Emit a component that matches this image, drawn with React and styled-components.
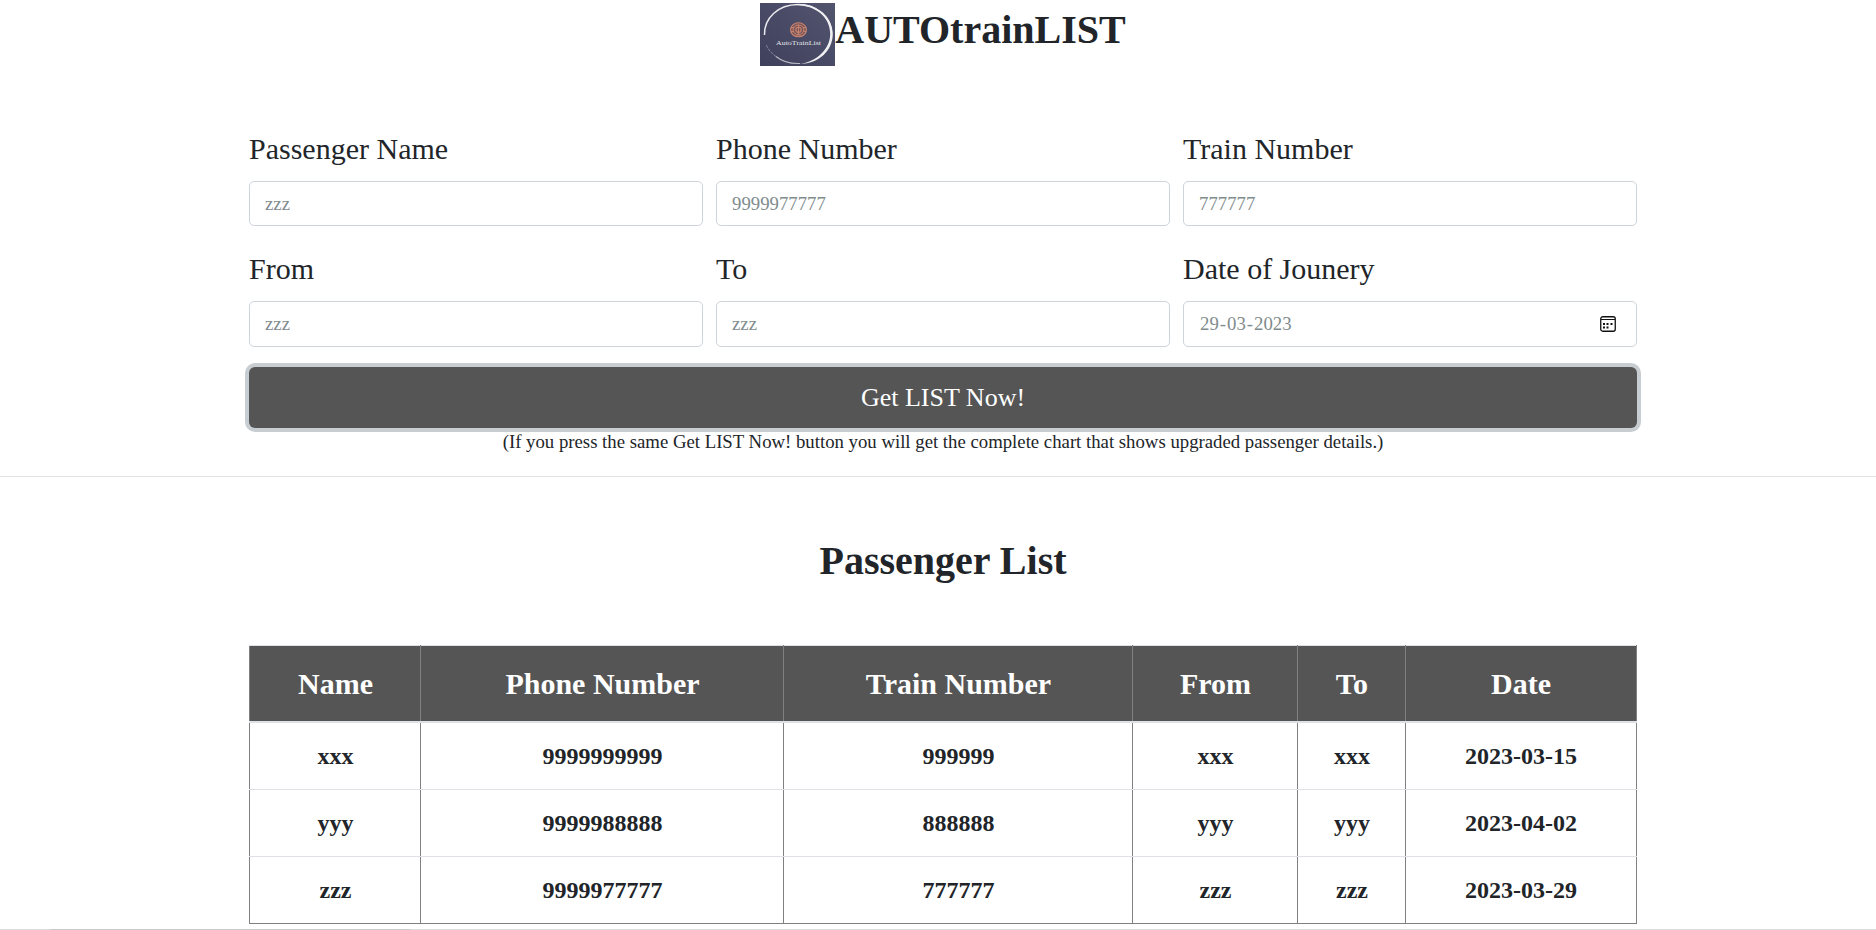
import React from "react";
import styled, { createGlobalStyle } from "styled-components";

const GlobalStyle = createGlobalStyle`
  *, *::before, *::after { box-sizing: border-box; }
  html, body { margin: 0; background: #fff; }
  body {
    color: #212529;
    font-family: "Liberation Serif", "Times New Roman", serif;
    overflow: hidden;
  }
`;

const Page = styled.div`
  display: flex;
  flex-direction: column;
  height: 930px;
`;

const Header = styled.header`
  display: flex;
  justify-content: center;
  align-items: flex-start;
  height: 126px;
  padding: 3px 0 0 10px;
`;

const Logo = styled.svg`
  display: block;
  width: 75px;
  height: 63px;
`;

const Title = styled.h1`
  margin: 0;
  padding-top: 2px;
  font-size: 40px;
  line-height: 50px;
`;

const Container = styled.section`
  width: 1388px;
  margin-left: 249px;
`;

const Fields = styled.div`
  display: grid;
  grid-template-columns: repeat(3, 454px);
  column-gap: 13px;
  row-gap: 20px;
`;

const Field = styled.div`
  display: flex;
  flex-direction: column;
  gap: 10px;
`;

const Label = styled.label`
  font-size: 30px;
  line-height: 45px;
`;

const Input = styled.input`
  width: 100%;
  height: ${(p) => p.$height}px;
  padding: 0 15px;
  border: 1px solid #ced4da;
  border-radius: 5px;
  background: #fff;
  color: #7f8c8d;
  font: 18.75px "Liberation Serif", "Times New Roman", serif;
  outline: none;
`;

const DateInput = styled.div`
  display: flex;
  align-items: center;
  justify-content: space-between;
  height: 46px;
  padding: 0 20px 0 15px;
  border: 1px solid #ced4da;
  border-radius: 5px;
  color: #7f8c8d;
  font-size: 18.75px;
`;

const DatePart = styled.span`
  padding: 0 1px;
`;

const SubmitButton = styled.button`
  display: block;
  width: 100%;
  height: 61px;
  margin: 20px 0 0;
  padding: 0;
  border: 0;
  border-radius: 6px;
  background: #555;
  box-shadow: 0 0 0 4px #c8cdd1;
  color: #fff;
  font: 26px "Liberation Serif", "Times New Roman", serif;
`;

const Note = styled.p`
  margin: 0;
  font-size: 18.75px;
  line-height: 28px;
  text-align: center;
`;

const Divider = styled.hr`
  width: 100%;
  margin: 20px 0 0;
  border: 0;
  border-top: 1px solid #e2e2e2;
`;

const ListTitle = styled.h2`
  margin: 59px 0;
  font-size: 40px;
  line-height: 50px;
  text-align: center;
`;

const Table = styled.table`
  width: 1388px;
  table-layout: fixed;
  border-collapse: collapse;
  text-align: center;
  font-weight: bold;
`;

const Col = styled.col`
  width: ${(p) => p.$width}px;
`;

const HeadCell = styled.th`
  height: 76px;
  padding: 2px 0 0 1px;
  background: #555;
  border: 1px solid gray;
  border-top-color: #dee2e6;
  border-bottom: 2px solid #dee2e6;
  color: #fff;
  font-size: 30px;

  &:last-child { padding-left: 0; }
`;

const Cell = styled.td`
  height: ${(p) => (p.$first ? 68 : 67)}px;
  padding: ${(p) => (p.$first ? 2 : 0)}px 0 0 1px;
  border: 1px solid gray;
  border-top-color: #dee2e6;
  border-bottom-color: ${(p) => (p.$last ? "gray" : "#dee2e6")};
  font-size: 24px;

  &:last-child { padding-left: 0; }
`;

const BottomEdge = styled.footer`
  height: 1px;
  margin-top: auto;
  background: linear-gradient(90deg, #dcdcdc 50px, #c9c9c9 50px 410px, #dcdcdc 410px);
`;

function TrainLogo() {
  return (
    <Logo viewBox="0 0 75 63">
      <defs>
        <linearGradient id="night" x1="0" y1="1" x2="1" y2="0">
          <stop offset="0" stopColor="#3f405c" />
          <stop offset="1" stopColor="#53546e" />
        </linearGradient>
      </defs>
      <rect width="75" height="63" fill="url(#night)" />
      <path d="M4.5 32C4 15 18 1.8 38 1.6C57 1.6 71 14 71.6 30" fill="none" stroke="#e9e9ef" strokeWidth="1.5" />
      <path d="M36 0.9C58 .3 72.6 14 72.8 31C72.5 48 59 60.5 40 61C56 58.5 70 47 70.2 31C70 14 56 2.6 36 2.1Z" fill="#f1f1f4" />
      <path d="M40 60.5C30 61 21 57.5 16 53.5" fill="none" stroke="#b9bac6" strokeWidth="1.1" />
      <path d="M16 53.5C11 50 8 46 6.3 42" fill="none" stroke="#8d8ea1" strokeWidth=".9" strokeDasharray="3 1" />
      <g fill="none" stroke="#c98470">
        <ellipse cx="38.5" cy="26.8" rx="8" ry="7" fill="#7b5658" strokeWidth="1.1" />
        <ellipse cx="38.5" cy="26.8" rx="5.4" ry="4.8" strokeWidth="1" />
        <ellipse cx="38.5" cy="26.8" rx="2.7" ry="2.6" strokeWidth="1.1" />
        <path d="M38.5 22v10M31 24.5h3M31 28.5h3M43 24.5h3M43 28.5h3M35.5 33h6" strokeWidth=".9" />
      </g>
      <text x="16" y="42.3" fill="#e4e4ea" fontSize="6.8" textLength="45" lengthAdjust="spacingAndGlyphs">
        AutoTrainList
      </text>
    </Logo>
  );
}

function CalendarIcon() {
  return (
    <svg width="16" height="16" viewBox="0 0 16 16">
      <rect x=".75" y=".75" width="14.5" height="14.5" rx="2" fill="none" stroke="#111" strokeWidth="1.3" />
      <path d="M1 3.5h14" stroke="#111" strokeWidth="1" />
      <path d="M3 7h2v2h-2zM6.5 7h2v2h-2zM10.5 7h2v2h-2zM3 10.5h2v2h-2zM6.5 10.5h2v2h-2z" fill="#111" />
    </svg>
  );
}

const fields = [
  { label: "Passenger Name", value: "zzz", height: 45 },
  { label: "Phone Number", value: "9999977777", height: 45 },
  { label: "Train Number", value: "777777", height: 45 },
  { label: "From", value: "zzz", height: 46 },
  { label: "To", value: "zzz", height: 46 },
];

const columns = [
  ["Name", 171],
  ["Phone Number", 363],
  ["Train Number", 349],
  ["From", 165],
  ["To", 108],
  ["Date", 231],
];

const passengers = [
  ["xxx", "9999999999", "999999", "xxx", "xxx", "2023-03-15"],
  ["yyy", "9999988888", "888888", "yyy", "yyy", "2023-04-02"],
  ["zzz", "9999977777", "777777", "zzz", "zzz", "2023-03-29"],
];

export default function App() {
  return (
    <Page>
      <GlobalStyle />
      <Header>
        <TrainLogo />
        <Title>AUTOtrainLIST</Title>
      </Header>
      <Container>
        <Fields>
          {fields.map((f) => (
            <Field key={f.label}>
              <Label>{f.label}</Label>
              <Input $height={f.height} defaultValue={f.value} />
            </Field>
          ))}
          <Field>
            <Label>Date of Jounery</Label>
            <DateInput>
              <span>
                <DatePart>29</DatePart>-<DatePart>03</DatePart>-<DatePart>2023</DatePart>
              </span>
              <CalendarIcon />
            </DateInput>
          </Field>
        </Fields>
        <SubmitButton>Get LIST Now!</SubmitButton>
        <Note>
          (If you press the same Get LIST Now! button you will get the complete chart that shows upgraded passenger
          details.)
        </Note>
      </Container>
      <Divider />
      <Container>
        <ListTitle>Passenger List</ListTitle>
        <Table>
          <colgroup>
            {columns.map(([name, width]) => (
              <Col key={name} $width={width} />
            ))}
          </colgroup>
          <thead>
            <tr>
              {columns.map(([name]) => (
                <HeadCell key={name}>{name}</HeadCell>
              ))}
            </tr>
          </thead>
          <tbody>
            {passengers.map((row, r) => (
              <tr key={row[0]}>
                {row.map((value, c) => (
                  <Cell key={c} $first={r === 0} $last={r === passengers.length - 1}>
                    {value}
                  </Cell>
                ))}
              </tr>
            ))}
          </tbody>
        </Table>
      </Container>
      <BottomEdge />
    </Page>
  );
}
